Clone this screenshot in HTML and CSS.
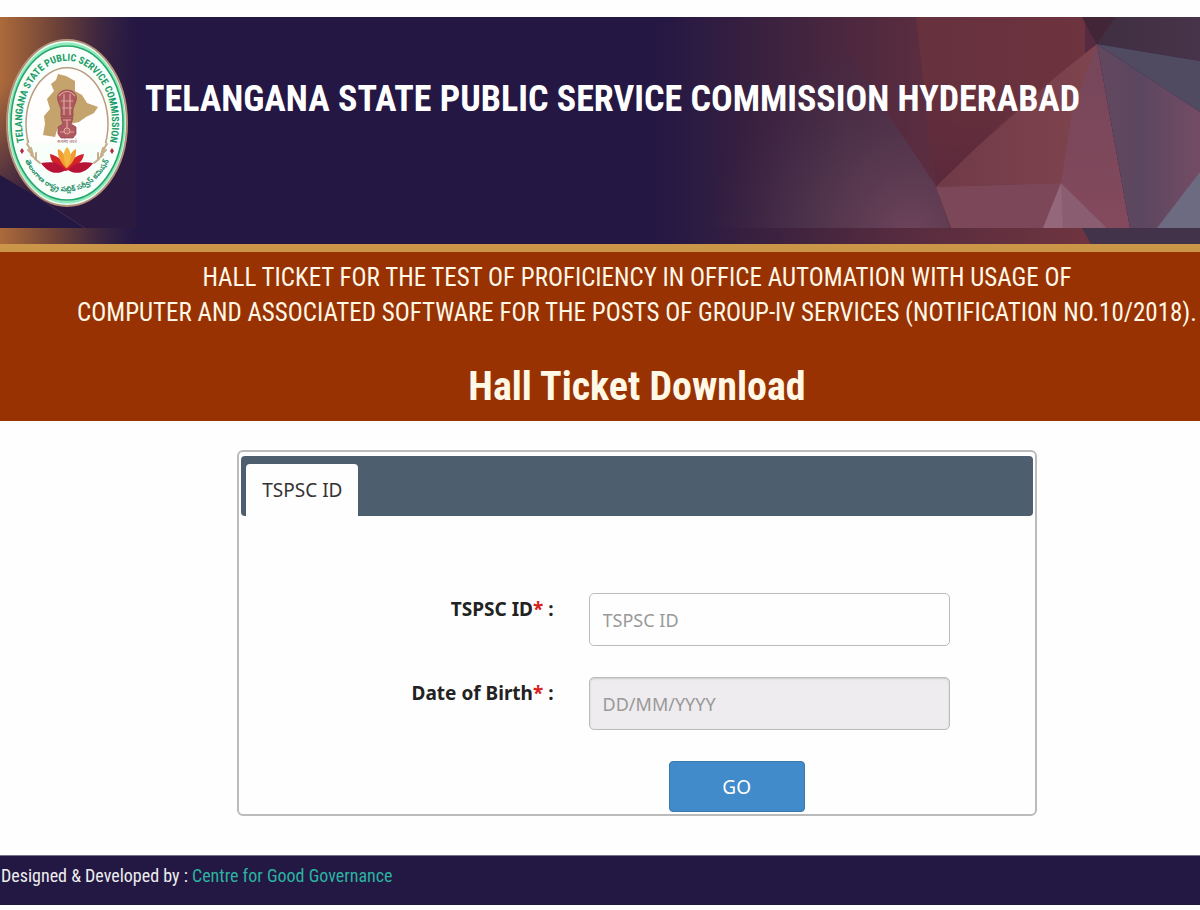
FILE: index.html
```html
<!DOCTYPE html>
<html lang="en">
<head>
    <meta charset="UTF-8">
    <meta name="viewport" content="width=device-width, initial-scale=1.0">
    <title>TSPSC Hall Ticket Download</title>
    <link rel="stylesheet" href="styles.css">
</head>
<body>
    <header class="header">
        <svg class="header-art" viewBox="0 0 1200 227" preserveAspectRatio="none" aria-hidden="true">
            <defs>
                <linearGradient id="wine" x1="0" x2="1">
                    <stop offset="0" stop-color="#241744"/>
                    <stop offset=".25" stop-color="#3a213f"/>
                    <stop offset=".55" stop-color="#562b3f"/>
                    <stop offset="1" stop-color="#70353f"/>
                </linearGradient>
                <radialGradient id="haze" gradientUnits="userSpaceOnUse" cx="910" cy="215" r="200">
                    <stop offset="0" stop-color="#6c445a"/>
                    <stop offset=".5" stop-color="#50364e" stop-opacity=".8"/>
                    <stop offset="1" stop-color="#3b2a4a" stop-opacity="0"/>
                </radialGradient>
                <linearGradient id="rust" x1="0" x2="1">
                    <stop offset="0" stop-color="#ad6a3b"/>
                    <stop offset=".4" stop-color="#6f4338"/>
                    <stop offset=".75" stop-color="#3b2540"/>
                    <stop offset="1" stop-color="#241744"/>
                </linearGradient>
                <linearGradient id="dusk" x1="0" x2=".3" y2="1">
                    <stop offset=".3" stop-color="#2b1940" stop-opacity="0"/>
                    <stop offset=".9" stop-color="#2b1940"/>
                </linearGradient>
                <linearGradient id="shade" x1="0" x2="0" y2="1">
                    <stop offset="0" stop-color="#5a293b" stop-opacity="0"/>
                    <stop offset="1" stop-color="#5a293b"/>
                </linearGradient>
                <linearGradient id="rose" x1="0" x2="1">
                    <stop offset="0" stop-color="#713a48"/>
                    <stop offset="1" stop-color="#80454e"/>
                </linearGradient>
                <linearGradient id="strip" x1="0" x2="0" y2="1">
                    <stop offset="0" stop-color="#75465a"/>
                    <stop offset="1" stop-color="#84495c"/>
                </linearGradient>
                <linearGradient id="mauve" x1="0" x2="1">
                    <stop offset="0" stop-color="#63485f"/>
                    <stop offset=".4" stop-color="#5b475f"/>
                    <stop offset="1" stop-color="#744b65"/>
                </linearGradient>
                <linearGradient id="slate" x1="0" x2="1">
                    <stop offset="0" stop-color="#3f2d40"/>
                    <stop offset="1" stop-color="#47344a"/>
                </linearGradient>
            </defs>
            <rect width="1200" height="227" fill="#241744"/>
            <rect width="135" height="211" fill="url(#rust)"/>
            <rect width="136" height="211" fill="url(#dusk)"/>
            <path d="M0 158L88 211H0z" fill="#231744"/>
            <path d="M40 182L85 211" stroke="#4a2c4c" fill="none"/>
            <rect x="655" width="430" height="211" fill="url(#wine)"/>
            <path d="M655 10H830L936 169L950 211H655z" fill="url(#haze)"/>
            <path d="M916 0H1082L1097 27L1000 125L936 169L925 80z" fill="#6c333f" opacity=".7"/>
            <path d="M923 60H1050L936 169z" fill="url(#shade)"/>
            <path d="M1097 27L1107 211L1061 166L936 170L975 132L1058 58z" fill="url(#rose)"/>
            <path d="M1097 27L1130 211H1107L1061 166L1072 95z" fill="url(#strip)"/>
            <path d="M936 170L1061 166L1043 211H951z" fill="#7c4859"/>
            <path d="M1061 166L1107 211H1043z" fill="#8a5d71"/>
            <path d="M1061 166L1063 211H1043z" fill="#95677a"/>
            <path d="M1082 0H1200V44L1097 27z" fill="url(#slate)"/>
            <path d="M1082 0H1115L1097 27z" fill="#422638"/>
            <path d="M1097 27L1200 44V95z" fill="#514b62"/>
            <path d="M1097 27L1200 95V211H1130z" fill="url(#mauve)"/>
            <path d="M1200 155V211H1157z" fill="#6c6b81"/>
            <rect y="211" width="135" height="16" fill="url(#rust)"/>
            <rect x="655" y="211" width="440" height="16" fill="url(#wine)"/>
            <path d="M1082 211H1200V227H1091z" fill="#42334a"/>
        </svg>
        <svg class="logo" viewBox="5 39 124 170" role="img" aria-label="Telangana State Public Service Commission seal">
            <defs>
                <path id="arc-top" d="M24.700 144A45 62 0 1 1 109.300 144"/>
                <path id="arc-bottom" d="M23.700 158A51 71 0 0 0 110.300 158"/>
            </defs>
            <ellipse cx="67" cy="123" rx="60" ry="83" fill="#e9fff4" stroke="#b49078" stroke-width="2"/>
            <ellipse cx="67" cy="123" rx="57" ry="79" fill="none" stroke="#8eeabb" stroke-width="3"/>
            <ellipse cx="67" cy="123" rx="56" ry="77" fill="#f8fffb" stroke="#25a66d" stroke-width="1.6"/>
            <path d="M28.500 143A41 56 0 1 1 105.500 143" fill="#fffefd" stroke="#b99b82" stroke-width="1.5"/>
            <path d="M58 74L66 76L75 81V91L82 95L87 103L98 107L94 113L86 117L79 122L70 124L58 127L55 137L43 135L45 124L44 116L50 109L47 99L54 91L51 84L56 80z" fill="#c4a36d"/>
            <g fill="#ad595d" stroke="#93404b" stroke-width=".7">
                <path d="M58 101C56 94 61 90 67 90S78 94 76 101L73 109V117H61V109z"/>
                <path d="M61 118H73L71 124L76 127V134L73 138H61L58 134V127L63 124z"/>
            </g>
            <path d="M59 96C64 90 70 90 75 96M61 101H73M64 94V115M70 94V115M62 108H72M60 132H74M63 120H71M67 120V128" stroke="#dda5a0" stroke-width="1.2" fill="none"/>
            <circle cx="67" cy="131" r="3" fill="#bd6a69" stroke="#efc6bd" stroke-width=".7"/>
            <text class="logo-motto" x="67" y="143" text-anchor="middle">सत्यमेव जयते</text>
            <path d="M27 137C27 149 32 158 40 163M107 137C106 149 102 158 94 163" stroke="#c8ad8b" stroke-width="1" fill="none"/>
            <path d="M27 144L31 150M28 150L33 155M31 148L33 155M31 155L36 159M36 153L36 159M35 159L40 163M107 144L103 150M106 150L101 155M103 148L101 155M103 155L98 159M98 153L98 159M99 159L94 163" stroke="#c8ad8b" stroke-width="2" stroke-linecap="round"/>
            <path d="M67 167C61 158 55 155 50 154C50 162 57 169 66 171C73 169 83 163 84 154C76 155 71 160 67 167z" fill="#d2232b"/>
            <path d="M66 170C56 160 49 162 41 163C47 172 56 176 66 170zM68 170C77 161 86 162 93 163C87 172 77 176 68 170z" fill="#b71336"/>
            <path d="M66 168C60 162 57 155 58 149C64 151 66 158 67 168C68 158 71 151 76 149C77 156 73 163 67 168z" fill="#f39a31"/>
            <path d="M67 168C62 159 63 151 67 147C72 152 72 160 67 168z" fill="#f3b640"/>
            <path d="M22 148L24 151L22 154L20 151zM112 148L114 151L112 154L110 151z" fill="#b42543"/>
            <text class="logo-text"><textPath href="#arc-top" startOffset="50%" text-anchor="middle">TELANGANA STATE PUBLIC SERVICE COMMISSION</textPath></text>
            <text class="logo-telugu"><textPath href="#arc-bottom" startOffset="50%" text-anchor="middle">తెలంగాణ రాష్ట్ర పబ్లిక్ సర్వీస్ కమిషన్</textPath></text>
        </svg>
        <h1 class="site-title">TELANGANA STATE PUBLIC SERVICE COMMISSION HYDERABAD</h1>
    </header>

    <section class="banner">
        <p class="notice">HALL TICKET FOR THE TEST OF PROFICIENCY IN OFFICE AUTOMATION WITH USAGE OF<br>COMPUTER AND ASSOCIATED SOFTWARE FOR THE POSTS OF GROUP-IV SERVICES (NOTIFICATION NO.10/2018).</p>
        <h2 class="page-title">Hall Ticket Download</h2>
    </section>

    <main class="content">
        <div class="panel">
            <nav class="tabs">
                <button class="tab" type="button">TSPSC ID</button>
            </nav>
            <form class="form">
                <div class="field">
                    <label for="tspscId">TSPSC ID<span class="required">*</span> :</label>
                    <input class="input" type="text" id="tspscId" placeholder="TSPSC ID">
                </div>
                <div class="field">
                    <label for="dob">Date of Birth<span class="required">*</span> :</label>
                    <input class="input" type="text" id="dob" placeholder="DD/MM/YYYY" readonly>
                </div>
                <div class="actions">
                    <button class="btn" type="button">GO</button>
                </div>
            </form>
        </div>
    </main>

    <footer class="footer">Designed &amp; Developed by : <a href="#">Centre for Good Governance</a></footer>
</body>
</html>
```
FILE: styles.css
```css
* {
    box-sizing: border-box;
}

body {
    margin: 0;
    padding-top: 17px;
    background-color: #fefefe;
    color: #222;
    font-family: "Noto Sans", sans-serif;
    font-size: 19px;
}

.header {
    position: relative;
    display: flex;
    align-items: flex-start;
    gap: 16px;
    min-height: 235px;
    padding: 22px 5px 0;
    background-color: #241744;
    border-bottom: 8px solid #cc9649;
}

.header-art {
    position: absolute;
    top: 0;
    left: 0;
    width: 100%;
    height: 100%;
}

.logo {
    position: relative;
    flex: none;
    width: 124px;
    height: 170px;
}

.logo-text {
    fill: #1f9d68;
    font-family: "Roboto Condensed", "Lato", sans-serif;
    font-size: 10px;
    font-weight: bold;
}

.logo-telugu {
    fill: #278f68;
    font-family: "Noto Sans Telugu", sans-serif;
    font-size: 7px;
    font-weight: bold;
}

.logo-motto {
    fill: #9b5860;
    font-family: "Noto Sans Devanagari", "Noto Sans", sans-serif;
    font-size: 4px;
}

.site-title {
    position: relative;
    margin: 32px 0 0;
    color: #fff;
    font-family: "Roboto Condensed", "Lato", sans-serif;
    font-size: 36px;
    line-height: 56px;
}

.banner {
    padding: 8px 0 8px 74px;
    background-color: #983202;
    color: #fff8e6;
    font-family: "Roboto Condensed", "Lato", sans-serif;
    text-align: center;
}

.notice {
    margin: 0;
    font-size: 25px;
    line-height: 35px;
}

.page-title {
    margin: 31px 0 0;
    font-size: 40px;
    line-height: 52px;
}

.content {
    padding: 29px 0 39px 74px;
}

.panel {
    width: 71%;
    margin: 0 auto;
    padding: 4px 2px 2px;
    border: 2px solid #bbb;
    border-radius: 6px;
}

.tabs {
    display: flex;
    padding: 8px 5px 0;
    background-color: #4d5f6f;
    border-radius: 4px;
}

.tab {
    padding: 0 16px;
    border: 0;
    border-radius: 4px 4px 0 0;
    background-color: #fefefe;
    color: #333;
    font: inherit;
    line-height: 52px;
}

.form {
    display: flex;
    flex-direction: column;
    gap: 31px;
    padding-top: 77px;
}

.field {
    display: flex;
    align-items: flex-start;
    gap: 35px;
    padding-left: 6px;
}

.field label {
    width: 39%;
    font-weight: bold;
    line-height: 32px;
    text-align: right;
}

.required {
    color: #d8201c;
}

.input {
    width: 46%;
    height: 53px;
    padding: 0 13px;
    border: 1px solid #bbb;
    border-radius: 5px;
    background-color: #fefefe;
    font: inherit;
    font-size: 18px;
}

.input::placeholder {
    color: #999;
    opacity: 1;
}

.input:read-only {
    background-color: #eeecee;
    box-shadow: inset 0 1px 2px #ccc;
}

.actions {
    padding-left: 54%;
}

.btn {
    display: block;
    width: 136px;
    height: 51px;
    border: 1px solid #3b78ac;
    border-radius: 4px;
    background-color: #428bca;
    color: #fff;
    font: inherit;
}

.footer {
    padding: 2px 1px 11px;
    border-top: 1px solid #777189;
    background-color: #231744;
    color: #eee;
    font-family: "Roboto Condensed", "Lato", sans-serif;
    font-size: 18px;
    line-height: 36px;
}

.footer a {
    color: #2bb3a0;
    text-decoration: none;
}
```
